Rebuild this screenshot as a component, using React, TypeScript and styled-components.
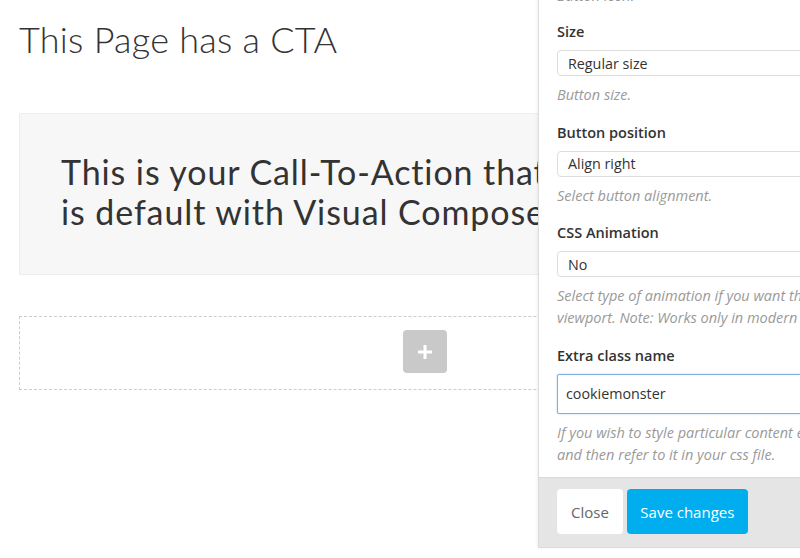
import React from "react";
import styled, { createGlobalStyle } from "styled-components";

const Global = createGlobalStyle`
  html, body { margin: 0; padding: 0; background: #fff; }
  body { overflow: hidden; width: 800px; height: 558px; position: relative; }
  * { box-sizing: border-box; }
`;

const Page = styled.div`
  position: relative;
  width: 800px;
  height: 558px;
  overflow: hidden;
`;

const Main = styled.main`
  width: 850px;
  padding: 18px 19px 0;
  display: flex;
  flex-direction: column;
`;

const Title = styled.h1`
  margin: 0 0 52px;
  font-family: "Lato", "Open Sans", sans-serif;
  font-weight: 300;
  font-size: 36px;
  line-height: 1.2;
  letter-spacing: 0.25px;
  color: #333;
`;

const CtaBox = styled.section`
  width: 812px;
  background: #f7f7f7;
  border: 1px solid #eeeeee;
  padding: 38px 41px 42px;
  font-family: "Lato", "Open Sans", sans-serif;
  font-size: 34px;
  line-height: 40px;
  letter-spacing: 0.9px;
  color: #333;
  margin-bottom: 41px;
  white-space: nowrap;
`;

const DropZone = styled.div`
  width: 812px;
  border: 1px dashed #cccccc;
  padding: 13px 0 16px;
  display: flex;
  justify-content: center;
`;

const AddButton = styled.button`
  width: 44px;
  height: 43px;
  border: none;
  border-radius: 4px;
  background: #c9c9c9;
  display: flex;
  align-items: center;
  justify-content: center;
  padding: 0;
`;

const Panel = styled.aside`
  position: absolute;
  top: 0;
  left: 538px;
  width: 340px;
  height: 548px;
  background: #fff;
  border-left: 1px solid #dcdcdc;
  border-bottom: 1px solid #dcdcdc;
  box-shadow: -1px 0 3px rgba(0, 0, 0, 0.06);
  display: flex;
  flex-direction: column;
  font-family: "Open Sans", "Liberation Sans", sans-serif;
`;

const PanelBody = styled.div`
  flex: 1;
  overflow: hidden;
  padding: 0 0 0 18px;
`;

const Field = styled.div`
  margin-bottom: 16.5px;
`;

const Label = styled.div`
  font-size: 14.5px;
  font-weight: 600;
  line-height: 20px;
  color: #333;
  margin: 0 0 8px;
`;

const SelectBox = styled.div`
  width: 320px;
  height: 26px;
  border: 1px solid #dddddd;
  border-radius: 4px;
  background: #fff;
  padding: 0 10px;
  display: flex;
  align-items: center;
  font-size: 14.3px;
  color: #333;
`;

const TextInput = styled.div`
  width: 320px;
  height: 40px;
  border: 1px solid #7fb1de;
  border-radius: 2px;
  box-shadow: 0 0 2px rgba(91, 157, 217, 0.5);
  background: #fff;
  padding: 0 8px;
  display: flex;
  align-items: center;
  font-size: 14.3px;
  color: #333;
`;

const Hint = styled.div<{ $clipped?: boolean }>`
  margin-top: ${(p) => (p.$clipped ? "-15px" : "8px")};
  margin-bottom: ${(p) => (p.$clipped ? "15px" : "0")};
  font-size: 14.5px;
  font-style: italic;
  line-height: 22px;
  color: #9a9a9a;
  white-space: nowrap;
`;

const Footer = styled.footer`
  height: 70px;
  background: #e5e5e5;
  border-top: 1px solid #dadada;
  padding: 11px 18px 0;
  display: flex;
  gap: 4px;
  align-items: flex-start;
`;

const Btn = styled.button<{ $primary?: boolean }>`
  height: 45px;
  border: none;
  border-radius: 4px;
  padding: 0 ${(p) => (p.$primary ? "13.5px" : "14px")};
  background: ${(p) => (p.$primary ? "#00aeef" : "#fff")};
  color: ${(p) => (p.$primary ? "#fff" : "#666")};
  font-family: "Open Sans", "Liberation Sans", sans-serif;
  font-size: 15px;
  cursor: pointer;
`;

export default function App() {
  return (
    <Page>
      <Global />
      <Main>
        <Title>This Page has a CTA</Title>
        <CtaBox>
          This is your Call-To-Action that
          <br />
          is default with Visual Composer
        </CtaBox>
        <DropZone>
          <AddButton aria-label="Add element">
            <svg width="16" height="16" viewBox="0 0 16 16">
              <path d="M8 1v14M1 8h14" stroke="#fff" strokeWidth="3" />
            </svg>
          </AddButton>
        </DropZone>
      </Main>
      <Panel>
        <PanelBody>
          <Hint $clipped>Button icon.</Hint>
          <Field>
            <Label>Size</Label>
            <SelectBox>Regular size</SelectBox>
            <Hint>Button size.</Hint>
          </Field>
          <Field>
            <Label>Button position</Label>
            <SelectBox>Align right</SelectBox>
            <Hint>Select button alignment.</Hint>
          </Field>
          <Field>
            <Label>CSS Animation</Label>
            <SelectBox>No</SelectBox>
            <Hint>
              Select type of animation if you want this element to be animated when it enters into the browsers
              <br />
              viewport. Note: Works only in modern browsers.
            </Hint>
          </Field>
          <Field>
            <Label>Extra class name</Label>
            <TextInput>cookiemonster</TextInput>
            <Hint>
              If you wish to style particular content element differently, then use this field to add a class name
              <br />
              and then refer to it in your css file.
            </Hint>
          </Field>
        </PanelBody>
        <Footer>
          <Btn>Close</Btn>
          <Btn $primary>Save changes</Btn>
        </Footer>
      </Panel>
    </Page>
  );
}
